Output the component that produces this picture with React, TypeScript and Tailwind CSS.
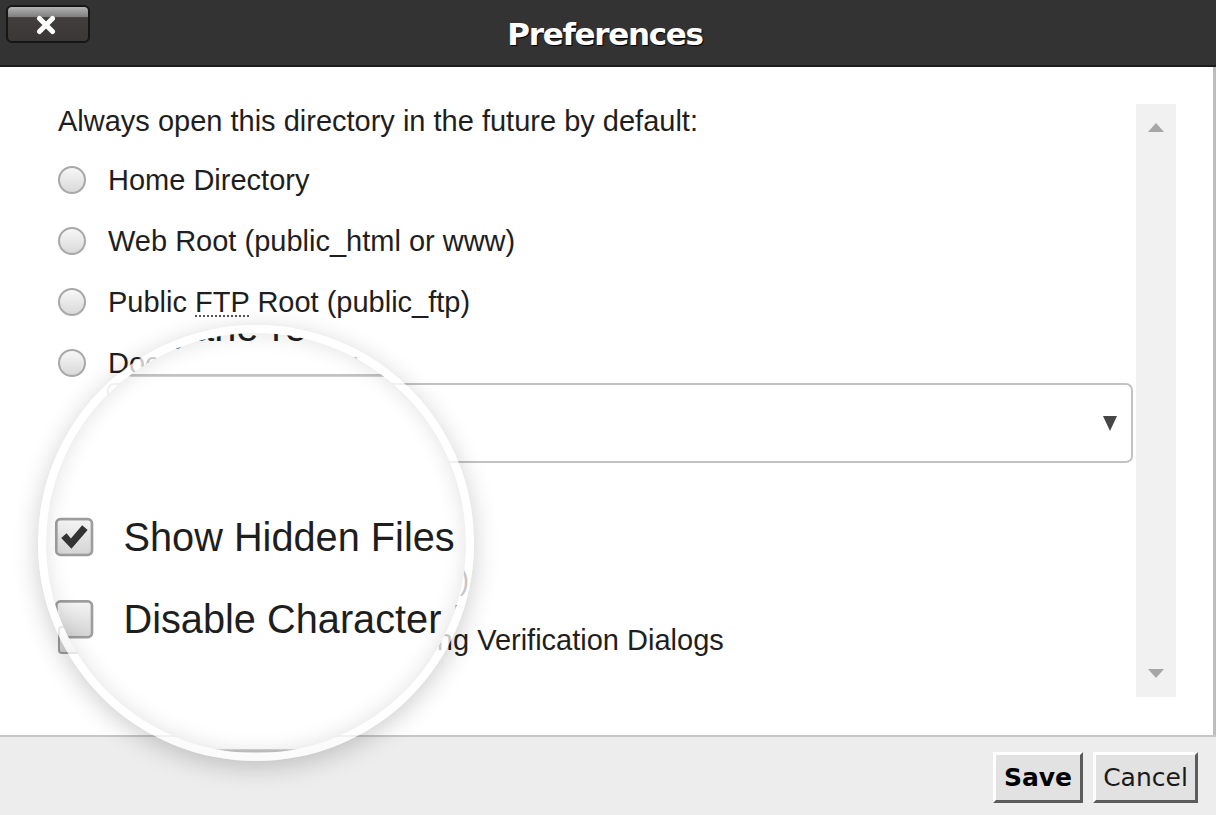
import React from "react";

const Radio = () => (
  <span className="w-[28px] h-[28px] rounded-full border-2 border-[#a8a8a8] bg-[linear-gradient(#f7f7f7,#d9d9d9)] shrink-0" />
);

const Checkbox = ({ checked }: { checked?: boolean }) => (
  <span className="w-[28px] h-[28px] rounded-[4px] border-2 border-[#9d9d9d] bg-[linear-gradient(#f3f3f3,#d5d5d5)] shrink-0 flex items-center justify-center">
    {checked && (
      <svg width="22" height="22" viewBox="0 0 28 28">
        <path d="M2 15 L7 10.5 L11 15.5 L21.5 3 L26.5 7.5 L11.5 25 Z" fill="#333" />
      </svg>
    )}
  </span>
);

const Row = ({ children, className }: { children: React.ReactNode; className: string }) => (
  <div className={"h-[36px] flex items-center " + className}>{children}</div>
);

const Dialog = () => (
  <div className="w-[1216px] h-[815px] bg-white flex flex-col font-['Liberation_Sans',Arial,sans-serif] text-[#1e1e1e]">
    <header className="h-[67px] shrink-0 bg-[#333] border-b-2 border-[#1c1c1c] grid grid-cols-[1fr_auto_1fr] items-center">
      <div className="self-start pt-[5px] pl-[6px]">
        <div className="w-[84px] h-[38px] rounded-[6px] border-2 border-[#161616] bg-[linear-gradient(to_bottom,#b3b3b3_0%,#7d7d7d_30%,#423e3d_31%,#3a3736_100%)] flex items-center justify-center">
          <svg width="22" height="20" viewBox="0 0 22 20" className="mr-[4px] mt-[1px]">
            <path d="M4.5 3.5 L17.5 16.5 M17.5 3.5 L4.5 16.5" stroke="#fff" strokeWidth="5" strokeLinecap="round" />
          </svg>
        </div>
      </div>
      <div className="font-['DejaVu_Sans',Verdana,sans-serif] font-bold text-[31px] text-white tracking-[-1.3px] [text-shadow:1px_1px_1px_#000] pr-[6px] pt-[3px]">
        Preferences
      </div>
      <div />
    </header>
    <main className="h-[668px] shrink-0 flex border-r-[3px] border-[#bdbdbd] text-[29px] leading-[36px]">
      <div className="flex-1 pl-[58px] pr-[3px] pt-[36px] flex flex-col">
        <div className="h-[36px] flex items-center">Always open this directory in the future by default:</div>
        <Row className="mt-[23px]">
          <Radio />
          <span className="ml-[22px]">Home Directory</span>
        </Row>
        <Row className="mt-[25px]">
          <Radio />
          <span className="ml-[22px]">Web Root (public_html or www)</span>
        </Row>
        <Row className="mt-[25px]">
          <Radio />
          <span className="ml-[22px]">
            Public{" "}
            <span className="underline decoration-dotted decoration-2 underline-offset-[3px] decoration-[#555]">FTP</span>{" "}
            Root (public_ftp)
          </span>
        </Row>
        <Row className="mt-[25px]">
          <Radio />
          <span className="ml-[22px]">Document Root for:</span>
        </Row>
        <div className="mt-[2px] ml-[49px] h-[80px] rounded-[7px] border-2 border-[#c2c2c2] flex items-center pl-[12px] pr-[14px]">
          <span className="flex-1 pt-[8px]">diyane-reviews.com</span>
          <svg width="14" height="15" viewBox="0 0 14 15">
            <path d="M0 0 H14 L7 15 Z" fill="#474747" />
          </svg>
        </div>
        <Row className="mt-[99px]">
          <Checkbox checked />
          <span className="ml-[22px]">Show Hidden Files (dotfiles)</span>
        </Row>
        <Row className="mt-[24px]">
          <Checkbox />
          <span className="ml-[22px]">Disable Character Encoding Verification Dialogs</span>
        </Row>
      </div>
      <div className="w-[40px] shrink-0 mt-[37px] h-[593px] bg-[#f1f1f1] flex flex-col items-center justify-between py-[19px]">
        <svg width="16" height="9" viewBox="0 0 16 9">
          <path d="M0 9 L8 0 L16 9 Z" fill="#a6a6a6" />
        </svg>
        <svg width="16" height="9" viewBox="0 0 16 9">
          <path d="M0 0 L16 0 L8 9 Z" fill="#a6a6a6" />
        </svg>
      </div>
      <div className="w-[37px] shrink-0" />
    </main>
    <footer className="flex-1 bg-[#ededed] border-t-2 border-[#c6c6c6] flex justify-end items-center gap-[10px] pr-[18px] pt-[3px] font-['DejaVu_Sans',Verdana,sans-serif] text-[25px]">
      <button className="w-[90px] h-[51px] bg-[#e2e2e2] border-[3px] border-t-white border-l-white border-r-[#5c5c5c] border-b-[#5c5c5c] font-bold text-black flex items-center justify-center">
        Save
      </button>
      <button className="w-[105px] h-[51px] bg-[#e2e2e2] border-[3px] border-t-white border-l-white border-r-[#5c5c5c] border-b-[#5c5c5c] text-[#1a1a1a] flex items-center justify-center">
        Cancel
      </button>
    </footer>
  </div>
);

const Lens = () => (
  <div className="absolute left-[38px] top-[325px] w-[436px] h-[436px] rounded-full shadow-[0_6px_26px_rgba(0,0,0,0.2)]">
    <div className="absolute inset-0 rounded-full overflow-hidden border-[8px] border-white/75 bg-white bg-clip-padding">
      <div className="absolute left-[-46px] top-[-333px] w-[1216px] h-[815px] origin-top-left [transform:translate(-24.5px,-257.6px)_scale(1.37)]">
        <Dialog />
      </div>
    </div>
    <div className="absolute inset-[8px] rounded-full shadow-[inset_0_0_22px_rgba(0,0,0,0.12)] pointer-events-none" />
  </div>
);

export default function App() {
  return (
    <div className="relative w-[1216px] h-[815px] overflow-hidden">
      <Dialog />
      <Lens />
    </div>
  );
}
